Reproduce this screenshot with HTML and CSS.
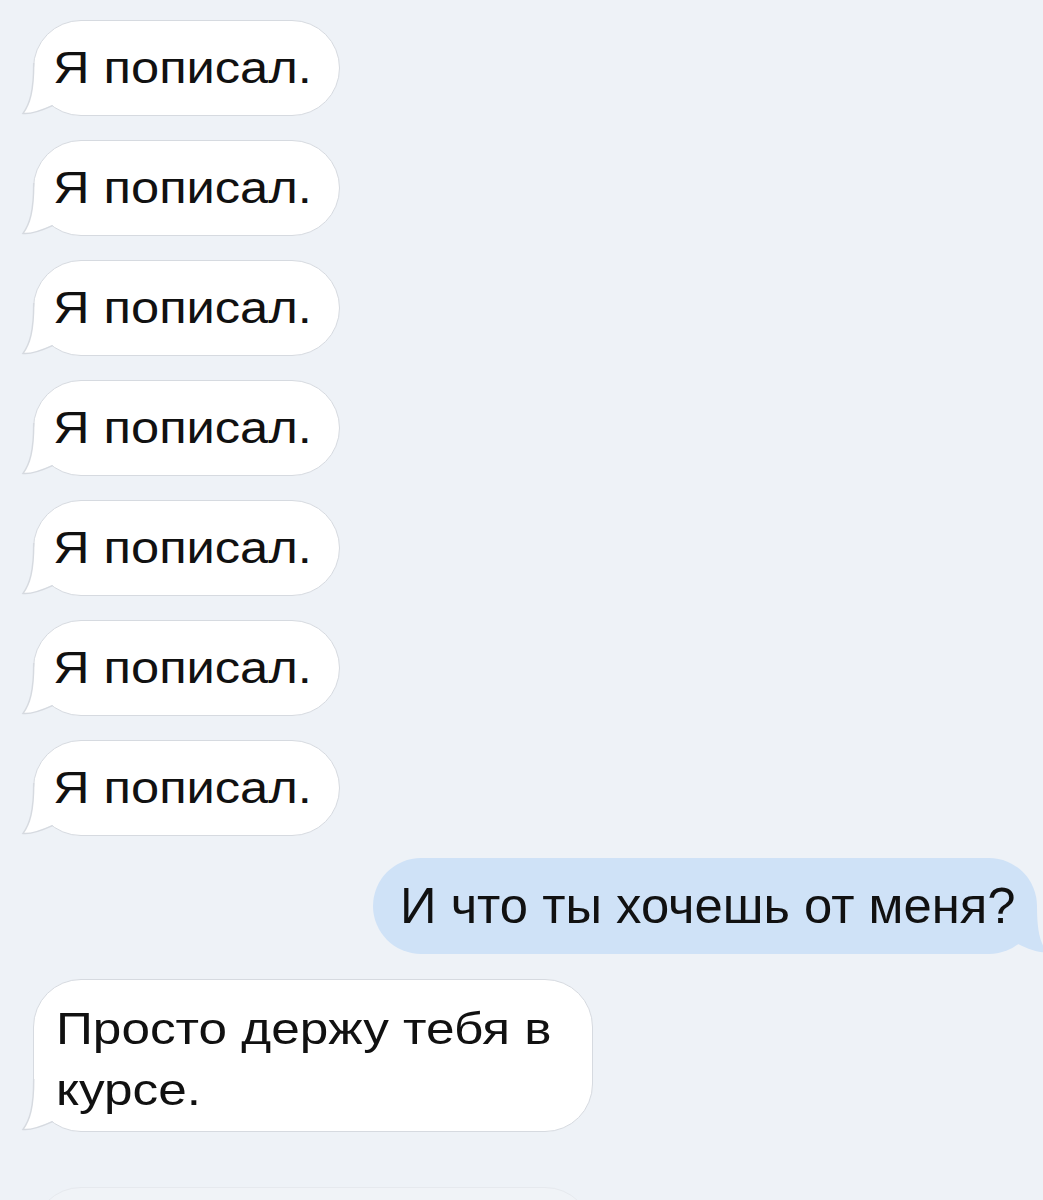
FILE: index.html
```html
<!DOCTYPE html>
<html lang="ru">
<head>
<meta charset="utf-8">
<title>Чат</title>
<link rel="stylesheet" href="styles.css">
</head>
<body>
<div class="chat">
  <div class="msg in short">
    <svg class="tail" width="40" height="58" viewBox="0 0 40 58"><path class="tail-fill" d="M13,8 C13,32 10,45 3,54 C10,55 20,52 32,46 L32,8 Z"/><path class="tail-line" d="M13.7,4 C13.7,32 10,45 3,54.4 C10,55.4 20,52.2 32.5,46.6"/></svg>
    <span class="text">Я пописал.</span>
  </div>
  <div class="msg in short">
    <svg class="tail" width="40" height="58" viewBox="0 0 40 58"><path class="tail-fill" d="M13,8 C13,32 10,45 3,54 C10,55 20,52 32,46 L32,8 Z"/><path class="tail-line" d="M13.7,4 C13.7,32 10,45 3,54.4 C10,55.4 20,52.2 32.5,46.6"/></svg>
    <span class="text">Я пописал.</span>
  </div>
  <div class="msg in short">
    <svg class="tail" width="40" height="58" viewBox="0 0 40 58"><path class="tail-fill" d="M13,8 C13,32 10,45 3,54 C10,55 20,52 32,46 L32,8 Z"/><path class="tail-line" d="M13.7,4 C13.7,32 10,45 3,54.4 C10,55.4 20,52.2 32.5,46.6"/></svg>
    <span class="text">Я пописал.</span>
  </div>
  <div class="msg in short">
    <svg class="tail" width="40" height="58" viewBox="0 0 40 58"><path class="tail-fill" d="M13,8 C13,32 10,45 3,54 C10,55 20,52 32,46 L32,8 Z"/><path class="tail-line" d="M13.7,4 C13.7,32 10,45 3,54.4 C10,55.4 20,52.2 32.5,46.6"/></svg>
    <span class="text">Я пописал.</span>
  </div>
  <div class="msg in short">
    <svg class="tail" width="40" height="58" viewBox="0 0 40 58"><path class="tail-fill" d="M13,8 C13,32 10,45 3,54 C10,55 20,52 32,46 L32,8 Z"/><path class="tail-line" d="M13.7,4 C13.7,32 10,45 3,54.4 C10,55.4 20,52.2 32.5,46.6"/></svg>
    <span class="text">Я пописал.</span>
  </div>
  <div class="msg in short">
    <svg class="tail" width="40" height="58" viewBox="0 0 40 58"><path class="tail-fill" d="M13,8 C13,32 10,45 3,54 C10,55 20,52 32,46 L32,8 Z"/><path class="tail-line" d="M13.7,4 C13.7,32 10,45 3,54.4 C10,55.4 20,52.2 32.5,46.6"/></svg>
    <span class="text">Я пописал.</span>
  </div>
  <div class="msg in short">
    <svg class="tail" width="40" height="58" viewBox="0 0 40 58"><path class="tail-fill" d="M13,8 C13,32 10,45 3,54 C10,55 20,52 32,46 L32,8 Z"/><path class="tail-line" d="M13.7,4 C13.7,32 10,45 3,54.4 C10,55.4 20,52.2 32.5,46.6"/></svg>
    <span class="text">Я пописал.</span>
  </div>

  <div class="msg out">
    <svg class="tail" width="40" height="58" viewBox="0 0 40 58"><path class="tail-fill" d="M27,8 C27,32 30,45 37,54 C30,55 20,52 8,46 L8,8 Z"/></svg>
    <span class="text">И что ты хочешь от меня?</span>
  </div>

  <div class="msg in long">
    <svg class="tail" width="40" height="58" viewBox="0 0 40 58"><path class="tail-fill" d="M13,8 C13,32 10,45 3,54 C10,55 20,52 32,46 L32,8 Z"/><path class="tail-line" d="M13.7,4 C13.7,32 10,45 3,54.4 C10,55.4 20,52.2 32.5,46.6"/></svg>
    <span class="text">Просто держу тебя в курсе.</span>
  </div>

  <div class="msg ghost"></div>
</div>
</body>
</html>
```

FILE: styles.css
```css
html, body {
  margin: 0;
  padding: 0;
  background: #eef2f7;
  overflow: hidden;
}

.chat {
  width: 1043px;
  height: 1200px;
  box-sizing: border-box;
  padding: 20px 0 0 33px;
  display: flex;
  flex-direction: column;
  align-items: flex-start;
  overflow: hidden;
  font-family: "Liberation Sans", Arial, sans-serif;
  color: #111111;
}

.msg {
  position: relative;
  box-sizing: border-box;
  border-radius: 48px;
  flex-shrink: 0;
}

.msg .text {
  display: inline-block;
  transform-origin: 0 50%;
  white-space: normal;
}

.tail {
  position: absolute;
  bottom: -2px;
  overflow: visible;
}

.in {
  background: #ffffff;
  border: 1.5px solid #d6dae0;
}

.in .tail {
  left: -14.5px;
}

.in .tail-fill {
  fill: #ffffff;
}

.tail-line {
  fill: none;
  stroke: #d6dae0;
  stroke-width: 1.5;
}

.short {
  width: 307px;
  height: 96px;
  margin-bottom: 24px;
  padding: 21.5px 10px 21.5px 19px;
  font-size: 44px;
  line-height: 50px;
}

.short .text {
  transform: scaleX(1.15);
}

.out {
  align-self: flex-end;
  width: 664px;
  margin: -2px 6px 0 0;
  height: 96px;
  padding: 23px 10px 23px 27px;
  background: #cfe2f7;
  font-size: 50px;
  line-height: 50px;
}

.out .text {
  white-space: nowrap;
  transform: scaleX(1.016);
}

.out .tail {
  right: -13px;
}

.out .tail-fill {
  fill: #cfe2f7;
}

.long {
  width: 560px;
  height: 153px;
  margin-top: 25px;
  padding: 17.5px 40px 12px 21.5px;
  font-size: 45px;
  line-height: 61px;
}

.long .text {
  transform: scaleX(1.14);
}

.ghost {
  width: 560px;
  height: 96px;
  margin-top: 55px;
  border: 1.5px solid #e6e9ee;
  background: #f0f3f7;
}
```
